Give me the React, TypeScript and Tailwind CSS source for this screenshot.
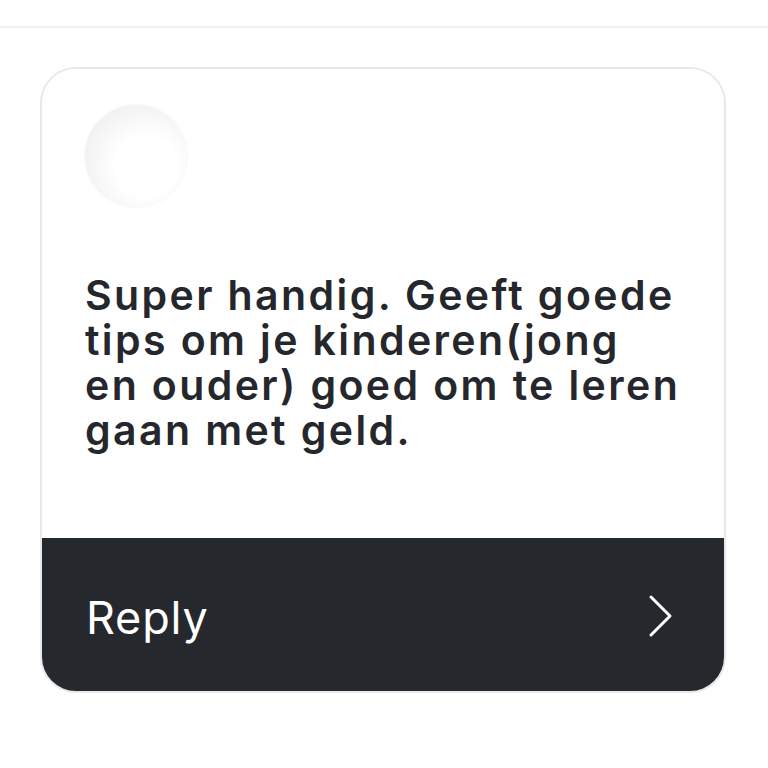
export default function App() {
    return (
        <div
            className="w-[768px] h-[768px] bg-white flex flex-col"
            style={{ fontFamily: "Inter, 'Noto Sans', sans-serif" }}
        >
            <div className="h-[26px] shrink-0" />
            <div className="h-[2px] shrink-0 bg-[#f0f0f1]" />
            <div className="pt-[39px] px-[40px]">
                <div className="w-[686px] h-[626px] rounded-[36px] border-2 border-[#e7e8ea] overflow-hidden flex flex-col">
                    <div className="flex-1 bg-white flex flex-col pl-[43px] pr-[4px]">
                        <div className="mt-[36px] w-[102px] h-[102px] rounded-full bg-[radial-gradient(circle_at_60%_60%,#ffffff_35%,#e9e9eb_100%)] shadow-[0_0_2px_rgba(0,0,0,0.1)]" />
                        <p className="mt-[66px] text-[41px] leading-[45px] font-semibold text-[#25272c] tracking-[2.4px] whitespace-nowrap">
                            Super handig. Geeft goede
                            <br />
                            tips om je kinderen(jong
                            <br />
                            en ouder) goed om te leren
                            <br />
                            gaan met geld.
                        </p>
                    </div>
                    <div className="h-[153px] shrink-0 bg-[#25282d] flex items-center justify-between pl-[44px] pr-[50px]">
                        <span className="text-[45px] text-white font-normal tracking-[0.8px] mt-[6px]">Reply</span>
                        <svg width="26" height="44" viewBox="0 0 26 44" fill="none" className="mt-[2px]">
                            <path d="M3 3 L22 22 L3 41" stroke="white" strokeWidth="3" strokeLinecap="round" strokeLinejoin="round" />
                        </svg>
                    </div>
                </div>
            </div>
        </div>
    );
}
